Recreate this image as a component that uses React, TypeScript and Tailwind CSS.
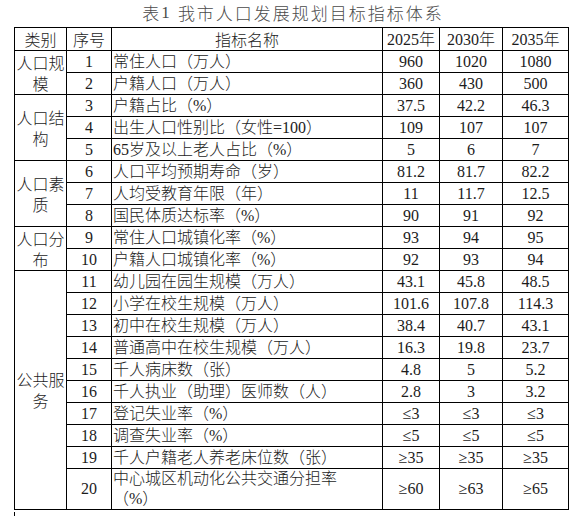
const GROUPS: { name: string; rows: [number, string, string, string, string][] }[] = [
  {
    name: "人口规模",
    rows: [
      [1, "常住人口（万人）", "960", "1020", "1080"],
      [2, "户籍人口（万人）", "360", "430", "500"],
    ],
  },
  {
    name: "人口结构",
    rows: [
      [3, "户籍占比（%）", "37.5", "42.2", "46.3"],
      [4, "出生人口性别比（女性=100）", "109", "107", "107"],
      [5, "65岁及以上老人占比（%）", "5", "6", "7"],
    ],
  },
  {
    name: "人口素质",
    rows: [
      [6, "人口平均预期寿命（岁）", "81.2", "81.7", "82.2"],
      [7, "人均受教育年限（年）", "11", "11.7", "12.5"],
      [8, "国民体质达标率（%）", "90", "91", "92"],
    ],
  },
  {
    name: "人口分布",
    rows: [
      [9, "常住人口城镇化率（%）", "93", "94", "95"],
      [10, "户籍人口城镇化率（%）", "92", "93", "94"],
    ],
  },
  {
    name: "公共服务",
    rows: [
      [11, "幼儿园在园生规模（万人）", "43.1", "45.8", "48.5"],
      [12, "小学在校生规模（万人）", "101.6", "107.8", "114.3"],
      [13, "初中在校生规模（万人）", "38.4", "40.7", "43.1"],
      [14, "普通高中在校生规模（万人）", "16.3", "19.8", "23.7"],
      [15, "千人病床数（张）", "4.8", "5", "5.2"],
      [16, "千人执业（助理）医师数（人）", "2.8", "3", "3.2"],
      [17, "登记失业率（%）", "≤3", "≤3", "≤3"],
      [18, "调查失业率（%）", "≤5", "≤5", "≤5"],
      [19, "千人户籍老人养老床位数（张）", "≥35", "≥35", "≥35"],
      [20, "中心城区机动化公共交通分担率|（%）", "≥60", "≥63", "≥65"],
    ],
  },
];

const cell = "border border-black p-0 text-center align-middle";
const serif = "font-['Liberation_Serif',serif] font-normal";
const cjk = "font-['Noto_Sans_CJK_SC',sans-serif] font-light";

export default function App() {
  return (
    <div className="h-[516px] w-[584px] overflow-hidden bg-white font-['Liberation_Serif','Noto_Sans_CJK_SC',serif] text-[#1c1c1c]">
      {/* Title */}
      <div className="flex h-[25px] items-center justify-center pl-[2px] text-[17px] tracking-[2px] text-[#4a4a4a]">
        <span className={cjk}>表</span>
        <span className={serif}>1&nbsp;</span>
        <span className={cjk}>我市人口发展规划目标指标体系</span>
      </div>

      <table className="ml-[14px] mt-[2px] w-[554px] table-fixed border-collapse text-[16px] leading-[20px]">
        <colgroup>
          <col className="w-[52px]" />
          <col className="w-[45px]" />
          <col className="w-[271px]" />
          <col className="w-[57px]" />
          <col className="w-[63px]" />
          <col className="w-[66px]" />
        </colgroup>
        <thead>
          <tr className="h-[22px]">
            <th className={`${cell} ${cjk}`}>类别</th>
            <th className={`${cell} ${cjk}`}>序号</th>
            <th className={`${cell} ${cjk}`}>指标名称</th>
            {["2025", "2030", "2035"].map((y) => (
              <th key={y} className={`${cell} font-normal`}>
                <span className={serif}>{y}</span>
                <span className={cjk}>年</span>
              </th>
            ))}
          </tr>
        </thead>
        <tbody>
          {GROUPS.map((g) =>
            g.rows.map((r, i) => {
              const [no, label, a, b, c] = r;
              const parts = label.split("|");
              return (
                <tr key={no} className={parts.length > 1 ? "h-[41px]" : "h-[22px]"}>
                  {i === 0 && (
                    <td rowSpan={g.rows.length} className={`${cell} ${cjk} leading-[21px]`}>
                      {g.name}
                    </td>
                  )}
                  <td className={`${cell} ${serif}`}>{no}</td>
                  <td className="border border-black p-0 pl-[1px] text-left align-middle whitespace-nowrap font-light">
                    {parts[0]}
                    {parts.length > 1 && (
                      <>
                        <br />
                        {parts[1]}
                      </>
                    )}
                  </td>
                  <td className={`${cell} ${serif}`}>{a}</td>
                  <td className={`${cell} ${serif}`}>{b}</td>
                  <td className={`${cell} ${serif}`}>{c}</td>
                </tr>
              );
            })
          )}
        </tbody>
      </table>

      {/* start of the next block below the table */}
      <div className="ml-[14px] mt-[2px] h-[10px] border-l border-black" />
    </div>
  );
}
